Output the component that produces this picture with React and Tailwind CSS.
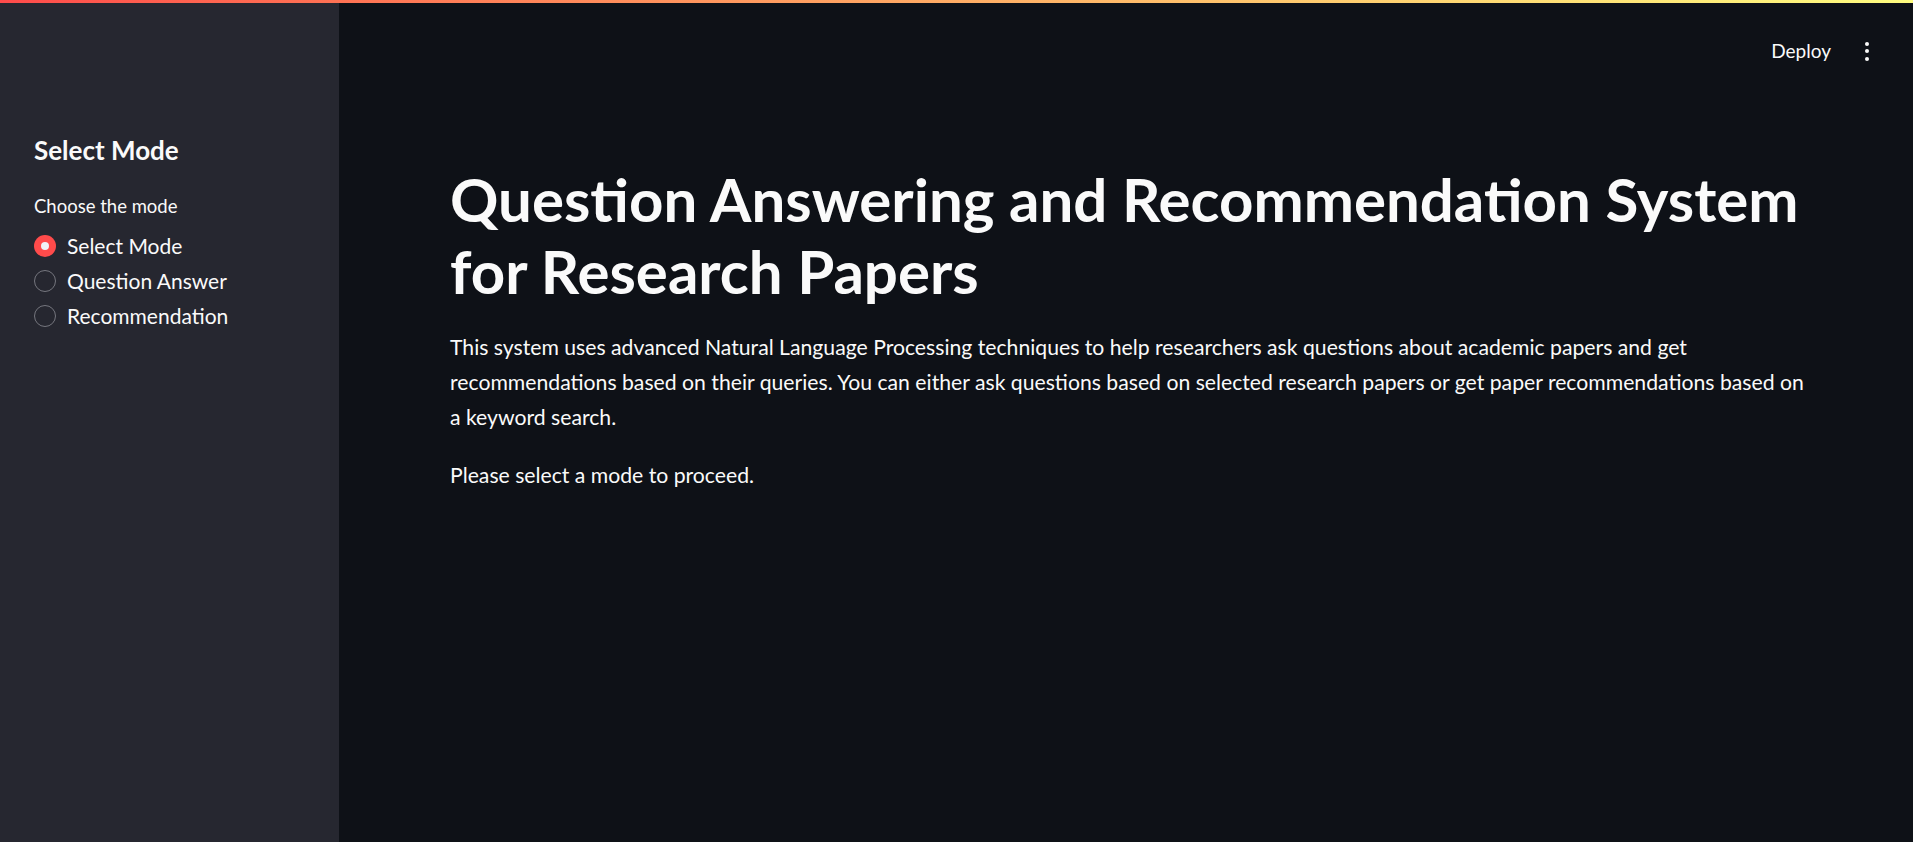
import React, { useState } from 'react';

const modes = ['Select Mode', 'Question Answer', 'Recommendation'];

function Radio({ label, checked, onSelect }) {
  return (
    <label className="flex items-center h-[35px] cursor-pointer" onClick={onSelect}>
      {checked ? (
        <span className="w-[22px] h-[22px] rounded-full bg-[#ff4b4b] flex items-center justify-center shrink-0">
          <span className="w-[8px] h-[8px] rounded-full bg-[#f0f2f6]" />
        </span>
      ) : (
        <span className="w-[22px] h-[22px] rounded-full border-[1.5px] border-[#75767e] shrink-0" />
      )}
      <span className="ml-[11px] text-[21px] text-[#fafafa]">{label}</span>
    </label>
  );
}

export default function App() {
  const [mode, setMode] = useState('Select Mode');

  return (
    <div className="h-screen w-full flex flex-col bg-[#0e1117] overflow-hidden" style={{ fontFamily: 'Lato, "Open Sans", sans-serif' }}>
      <div className="h-[3px] w-full bg-gradient-to-r from-[#ff4b4b] to-[#fffd80] shrink-0" />
      <div className="flex flex-1 min-h-0">
        <aside className="w-[339px] shrink-0 bg-[#262730] pl-[34px] pt-[130px]">
          <h3 className="text-[26px] leading-[34px] font-bold text-[#fafafa]">Select Mode</h3>
          <div className="mt-[26px] text-[18.5px] leading-[26px] text-[#fafafa]">Choose the mode</div>
          <div className="mt-[9px] flex flex-col">
            {modes.map(m => (
              <Radio key={m} label={m} checked={mode === m} onSelect={() => setMode(m)} />
            ))}
          </div>
        </aside>

        <main className="flex-1 flex flex-col min-w-0">
          <header className="flex justify-end items-center h-[96px] pr-[40px] shrink-0">
            <button className="text-[19px] text-[#fafafa] mr-[30px]">Deploy</button>
            <button className="flex flex-col gap-[3.5px] items-center px-[4px]">
              <span className="w-[4px] h-[4px] rounded-full bg-[#fafafa]" />
              <span className="w-[4px] h-[4px] rounded-full bg-[#fafafa]" />
              <span className="w-[4px] h-[4px] rounded-full bg-[#fafafa]" />
            </button>
          </header>

          <div className="pl-[111px] pr-[96px] pt-[64px]">
            <h1 className="text-[60px] leading-[72px] font-bold text-[#fafafa]">
              Question Answering and Recommendation System for Research Papers
            </h1>
            <p className="mt-[23px] text-[21.2px] leading-[35px] text-[#fafafa]">
              This system uses advanced Natural Language Processing techniques to help researchers ask questions about academic papers and get recommendations based on their queries. You can either ask questions based on selected research papers or get paper recommendations based on a keyword search.
            </p>
            <p className="mt-[23px] text-[21.2px] leading-[35px] text-[#fafafa]">
              Please select a mode to proceed.
            </p>
          </div>
        </main>
      </div>
    </div>
  );
}
